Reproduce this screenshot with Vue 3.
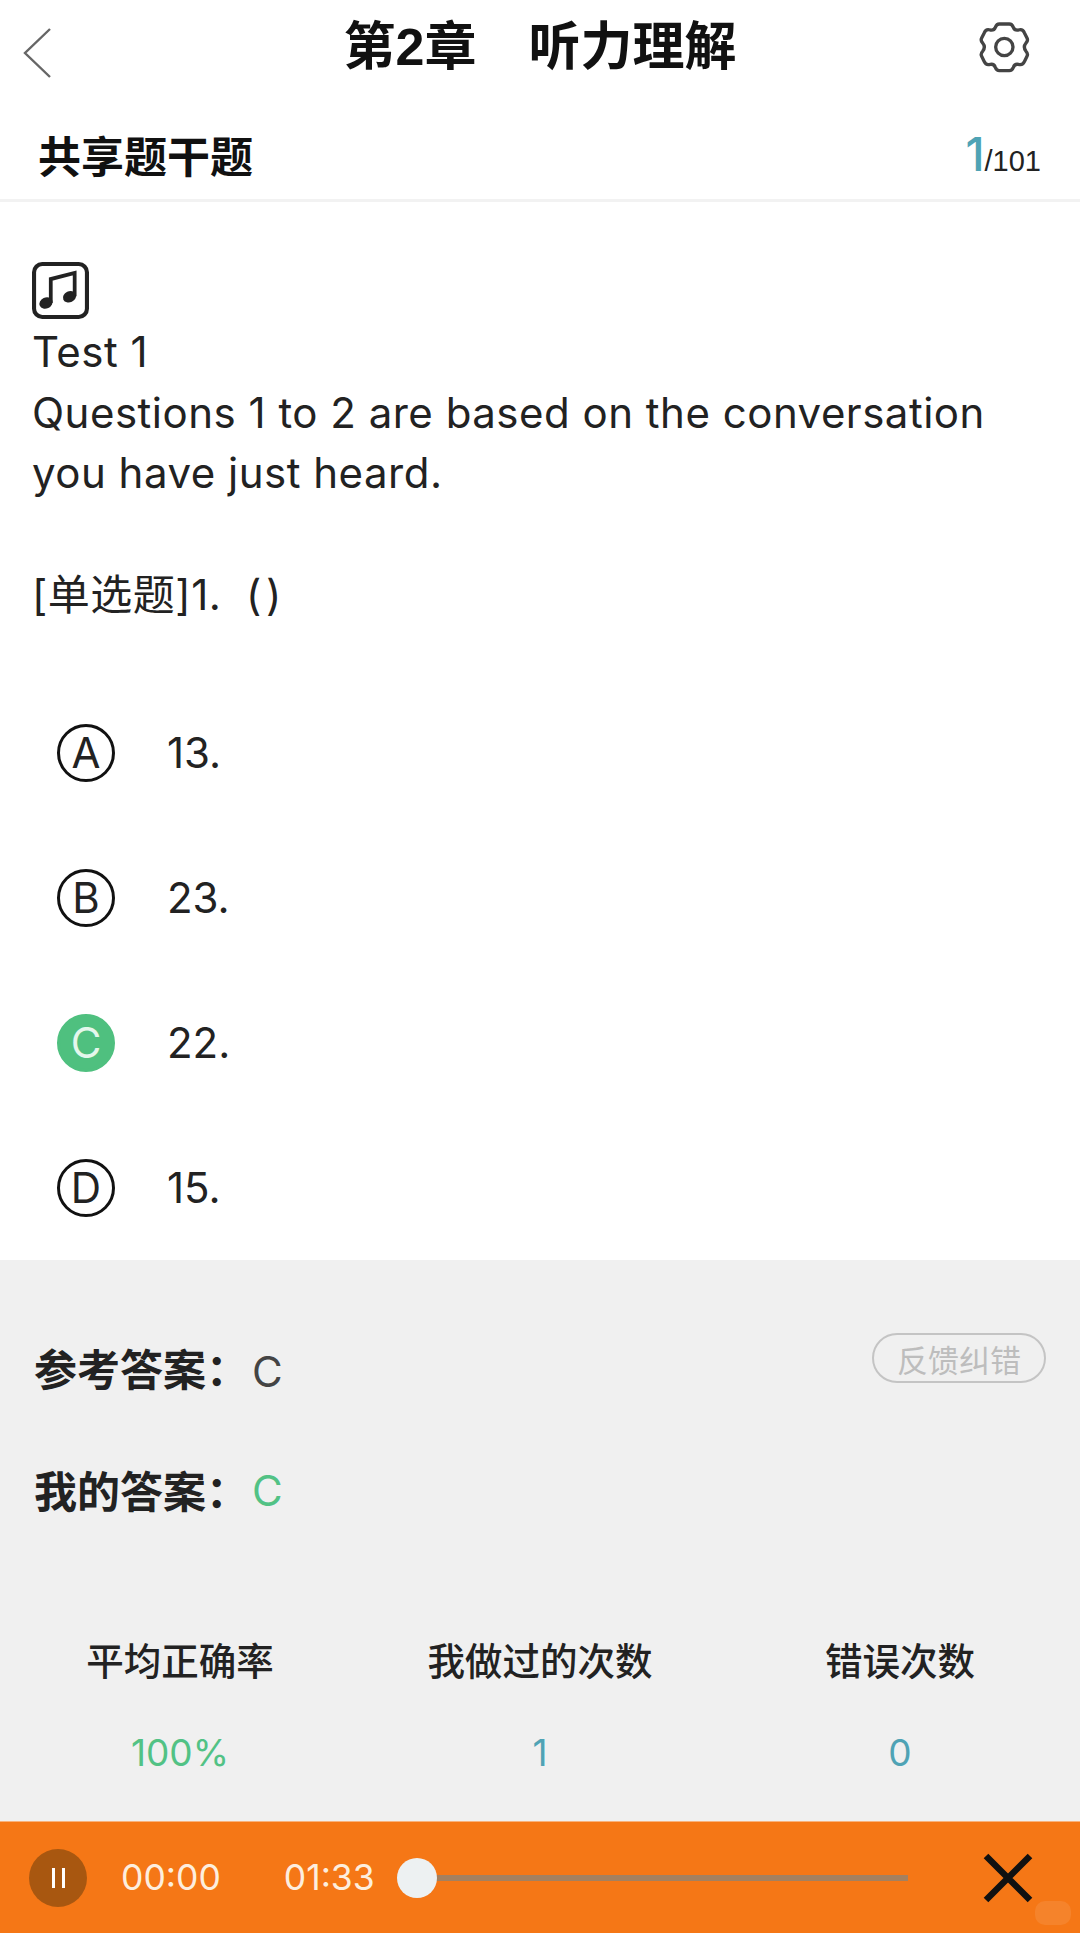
<template>
  <div class="page">
    <header class="nav">
      <svg class="back" viewBox="0 0 28 50" width="28" height="50">
        <path d="M27 1 L2 25 L27 49" fill="none" stroke="#666" stroke-width="2.4" />
      </svg>
      <h1 class="nav-title">第2章&emsp;听力理解</h1>
      <svg class="gear" viewBox="0 0 240 225" width="80" height="75">
        <path
          d="M100 42 H130 Q138 42 142 52 Q146 62 157 60 Q170 56 175 68 L183 84 Q187 92 180 99 Q170 111 180 124 Q187 131 183 139 L175 155 Q170 167 157 163 Q146 161 142 172 Q138 182 130 182 H100 Q92 182 88 172 Q84 161 73 163 Q60 167 55 155 L47 139 Q43 131 50 124 Q60 111 50 99 Q43 92 47 84 L55 68 Q60 56 73 60 Q84 62 88 52 Q92 42 100 42 Z"
          fill="none"
          stroke="#444"
          stroke-width="10"
          stroke-linejoin="round"
        />
        <circle cx="115" cy="111" r="26" fill="none" stroke="#444" stroke-width="10" />
      </svg>
    </header>

    <div class="section-bar">
      <span class="section-title">共享题干题</span>
      <span class="counter"><b>1</b>/101</span>
    </div>

    <main class="question">
      <svg class="audio-icon" viewBox="38 38 167 167" width="57" height="57">
        <rect x="44" y="44" width="155" height="155" rx="24" fill="none" stroke="#222" stroke-width="12" />
        <path d="M93 158 V88 L163 70 V138" fill="none" stroke="#222" stroke-width="11" />
        <ellipse cx="79" cy="158" rx="20" ry="16" transform="rotate(-25 79 158)" fill="#222" />
        <ellipse cx="148" cy="140" rx="20" ry="16" transform="rotate(-25 148 140)" fill="#222" />
      </svg>
      <p class="stem">Test 1</p>
      <p class="stem wrap">Questions 1 to 2 are based on the conversation you have just heard.</p>
      <p class="stem type">[单选题]1.&nbsp;&nbsp;(&#8202;)</p>

      <ul class="options">
        <li v-for="opt in options" :key="opt.key" class="option">
          <span class="badge" :class="{ right: opt.key === answer }">{{ opt.key }}</span>
          <span class="option-text">{{ opt.text }}</span>
        </li>
      </ul>
    </main>

    <section class="analysis">
      <div class="answer-row">
        <span class="answer-label">参考答案：</span>
        <span class="answer-value">{{ answer }}</span>
        <span class="feedback">反馈纠错</span>
      </div>
      <div class="answer-row mine">
        <span class="answer-label">我的答案：</span>
        <span class="answer-value green">{{ answer }}</span>
      </div>

      <div class="stats">
        <div v-for="s in stats" :key="s.label" class="stat">
          <div class="stat-label">{{ s.label }}</div>
          <div class="stat-value" :class="s.tone">{{ s.value }}</div>
        </div>
      </div>
    </section>

    <footer class="player">
      <button class="pause"><i></i><i></i></button>
      <span class="time first">00:00</span>
      <span class="time second">01:33</span>
      <div class="track"><span class="thumb"></span></div>
      <svg class="close" viewBox="0 0 50 50" width="50" height="50">
        <path d="M3 3 L47 47 M47 3 L3 47" stroke="#111" stroke-width="6.500" fill="none" />
      </svg>
      <span class="mark"></span>
    </footer>
  </div>
</template>

<script setup>
const answer = "C";

const options = [
  { key: "A", text: "13." },
  { key: "B", text: "23." },
  { key: "C", text: "22." },
  { key: "D", text: "15." },
];

const stats = [
  { label: "平均正确率", value: "100%", tone: "green" },
  { label: "我做过的次数", value: "1", tone: "teal" },
  { label: "错误次数", value: "0", tone: "teal" },
];
</script>

<style>
html,
body {
  margin: 0;
  background: #fff;
}
</style>

<style scoped>
.page {
  width: 1080px;
  height: 1933px;
  display: flex;
  flex-direction: column;
  overflow: hidden;
  background: #fff;
  color: #1c1c1c;
  font-family: Inter, "Noto Sans CJK SC", sans-serif;
}

.nav {
  height: 94px;
  flex: none;
  display: grid;
  grid-template-columns: 1fr auto 1fr;
  align-items: center;
  padding: 0 34px;
}
.nav-title {
  margin: 0;
  font-family: "Liberation Sans", "Noto Sans CJK SC", sans-serif;
  font-size: 52px;
  font-weight: 700;
  line-height: 94px;
  color: #111;
}
.back {
  margin: 12px 0 0 -11px;
}
.gear {
  justify-self: end;
}

.section-bar {
  height: 108px;
  flex: none;
  box-sizing: border-box;
  padding: 14px 39px 0 38px;
  display: flex;
  align-items: center;
  justify-content: space-between;
  border-bottom: 3px solid #f2f2f2;
}
.section-title {
  font-size: 43px;
  font-weight: 700;
  color: #111;
}
.counter {
  font-family: "Liberation Sans", sans-serif;
  font-size: 29px;
  color: #222;
}
.counter b {
  font-family: Inter, sans-serif;
  font-size: 46px;
  font-weight: 500;
  color: #4fa3b5;
}

.question {
  flex: 1;
  min-height: 0;
  padding: 60px 32px 0;
}
.audio-icon {
  display: block;
  margin-bottom: 3px;
}
.stem {
  margin: 0;
  font-size: 42px;
  font-weight: 400;
  letter-spacing: 0.5px;
  line-height: 60.500px;
  color: #222;
}
.wrap {
  max-width: 970px;
}
.type {
  margin-top: 61px;
}

.options {
  list-style: none;
  margin: 55px 0 0;
  padding: 0;
}
.option {
  height: 145px;
  display: flex;
  align-items: center;
  padding-left: 25px;
}
.badge {
  width: 58px;
  height: 58px;
  box-sizing: border-box;
  border: 3px solid #111;
  border-radius: 50%;
  display: flex;
  align-items: center;
  justify-content: center;
  font-size: 42px;
  font-weight: 400;
  color: #222;
}
.badge.right {
  border-color: #4fc07f;
  background: #4fc07f;
  color: #e4f7ec;
}
.option-text {
  margin-left: 52px;
  font-size: 42px;
  font-weight: 400;
  color: #222;
}

.analysis {
  height: 561px;
  flex: none;
  box-sizing: border-box;
  padding: 0 34px;
  background: #f0f0f0;
}
.answer-row {
  display: flex;
  align-items: center;
  height: 60px;
  margin-top: 77px;
}
.answer-row.mine {
  margin-top: 62px;
}
.answer-label {
  font-size: 43px;
  font-weight: 700;
  color: #222;
}
.answer-value {
  font-size: 42px;
  font-weight: 400;
  color: #444;
  margin-left: 3px;
  padding-top: 8px;
}
.answer-value.green {
  color: #52c285;
  padding-top: 2px;
}
.feedback {
  margin-left: auto;
  width: 174px;
  height: 50px;
  margin-top: -18px;
  box-sizing: border-box;
  border: 2.500px solid #c4c4c4;
  border-radius: 25px;
  display: flex;
  align-items: center;
  justify-content: center;
  font-size: 31px;
  color: #bdbdbd;
}

.stats {
  display: grid;
  grid-template-columns: repeat(3, 1fr);
  margin: 118px -34px 0;
  text-align: center;
}
.stat-label {
  font-size: 37.500px;
  font-weight: 500;
  color: #222;
  line-height: 50px;
}
.stat-value {
  margin-top: 45px;
  font-size: 37px;
  font-weight: 400;
  line-height: 42px;
}
.green {
  color: #52c285;
}
.teal {
  color: #4fa3b5;
}

.player {
  position: relative;
  height: 112px;
  flex: none;
  background: #f57716;
  border-top: 1px solid #f8b27c;
  box-sizing: border-box;
  display: flex;
  align-items: center;
  padding: 0 47px 0 29px;
  color: #fdeede;
}
.pause {
  width: 58px;
  height: 58px;
  flex: none;
  padding: 0;
  border: none;
  border-radius: 50%;
  background: #a85710;
  display: flex;
  align-items: center;
  justify-content: center;
  gap: 7px;
}
.pause i {
  display: block;
  width: 3px;
  height: 20px;
  background: #fff;
}
.time {
  font-size: 35.500px;
  font-weight: 400;
}
.time.first {
  margin-left: 34px;
}
.time.second {
  margin-left: 63px;
}
.track {
  position: relative;
  flex: 1;
  height: 6px;
  margin: 1px 75px 0 22px;
  background: #a4805f;
}
.thumb {
  position: absolute;
  left: 0;
  top: 50%;
  width: 40px;
  height: 40px;
  transform: translateY(-50%);
  border-radius: 50%;
  background: #edf1f2;
}
.mark {
  position: absolute;
  right: 9px;
  bottom: 8px;
  width: 36px;
  height: 24px;
  border-radius: 10px;
  background: rgba(255, 255, 255, 0.09);
}
</style>
